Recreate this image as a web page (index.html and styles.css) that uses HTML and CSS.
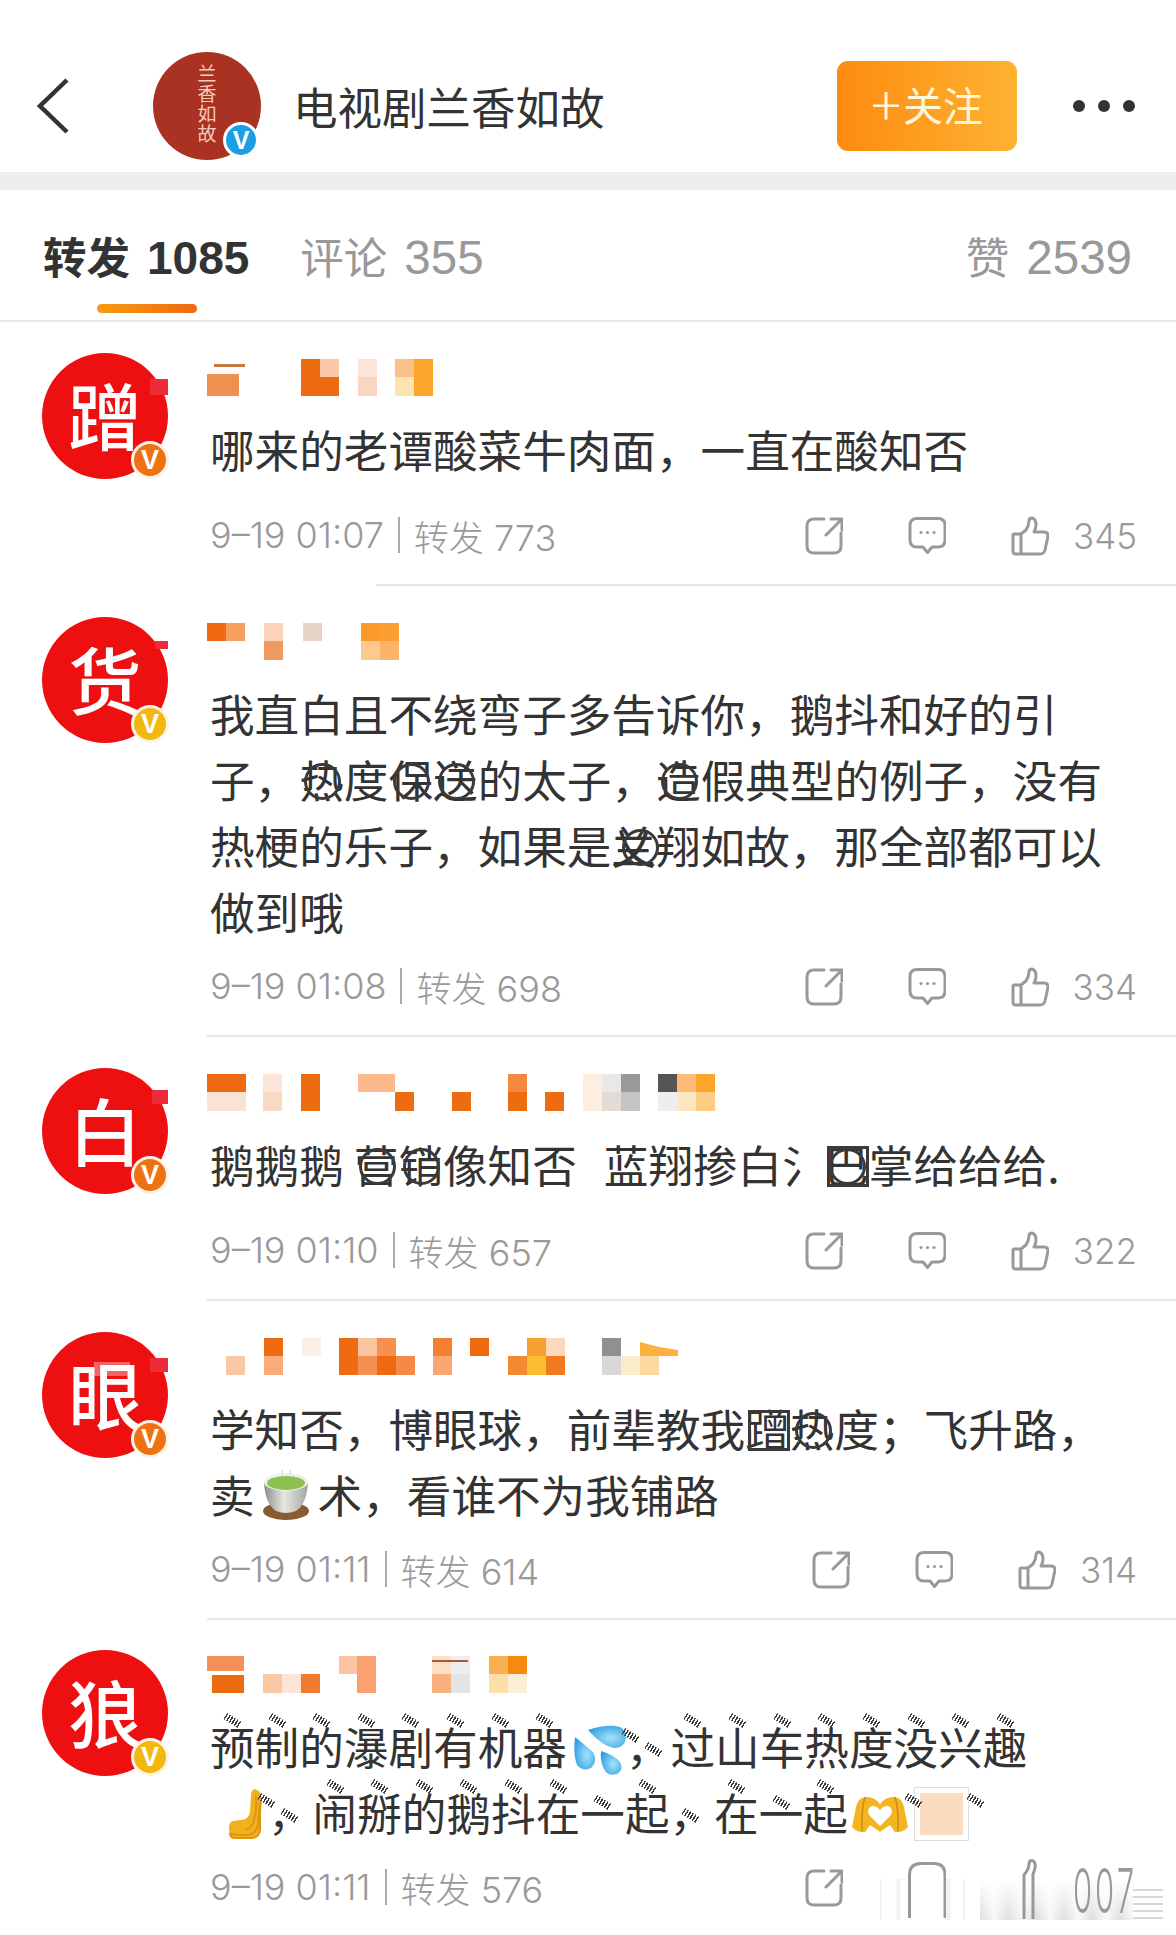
FILE: index.html
```html
<!DOCTYPE html>
<html lang="zh-CN">
<head>
    <meta charset="UTF-8">
    <meta name="viewport" content="width=device-width, initial-scale=1.0">
    <title>电视剧兰香如故</title>
    <link rel="stylesheet" href="styles.css">
</head>
<body>
    <svg class="defs" width="0" height="0">
        <defs>
            <radialGradient id="drop" cx="60%" cy="55%" r="65%">
                <stop offset="0" stop-color="#a5e4fa"/>
                <stop offset="1" stop-color="#2f9fe4"/>
            </radialGradient>
            <linearGradient id="cup" x1="0" x2="1" y1="0" y2="0">
                <stop offset="0" stop-color="#8d8d8a"/>
                <stop offset=".45" stop-color="#e6e6e2"/>
                <stop offset="1" stop-color="#a5a5a2"/>
            </linearGradient>
        </defs>
        <symbol id="i-share" viewBox="0 0 38 38">
            <path d="M19 2 H9 Q2 2 2 9 V29 Q2 36 9 36 H29 Q36 36 36 29 V16 M21 18 L36 3 M26 2 H37 V13" fill="none" stroke="#999" stroke-width="3" stroke-linecap="round" stroke-linejoin="round"/>
        </symbol>
        <symbol id="i-comment" viewBox="0 0 38 38">
            <path d="M9 1.5 H30 Q37 1.5 37 8.5 V23 Q37 30 30 30 H24 L19.5 35.5 L15 30 H9 Q2 30 2 23 V8.5 Q2 1.5 9 1.5 Z" fill="none" stroke="#999" stroke-width="3" stroke-linejoin="round"/>
            <circle cx="13" cy="15.5" r="1.6" fill="#999"/>
            <circle cx="19.5" cy="15.5" r="1.6" fill="#999"/>
            <circle cx="26" cy="15.5" r="1.6" fill="#999"/>
        </symbol>
        <symbol id="i-like" viewBox="0 0 38 40">
            <path d="M3 18 H10 V38 H5 Q2 38 2 35 V19 Q2 18 3 18 Z M10 18 L15 14 Q18 9 18 5 Q18 2 21 2 Q25 3 25 9 Q25 13 23 16 H33 Q37 16 37 20 L34 34 Q33 38 29 38 H10" fill="none" stroke="#999" stroke-width="3" stroke-linejoin="round"/>
        </symbol>
    </svg>

    <header class="topbar">
        <svg class="back" width="33" height="56" viewBox="0 0 33 56">
            <path d="M31 2 L4 28 L31 54" fill="none" stroke="#333" stroke-width="4.5"/>
        </svg>
        <div class="page-avatar">
            <div class="page-avatar-text">兰<br>香<br>如<br>故</div>
            <span class="badge badge-blue">V</span>
        </div>
        <div class="page-title">电视剧兰香如故</div>
        <button class="follow"><span class="plus">+</span>关注</button>
        <div class="dots"><i></i><i></i><i></i></div>
    </header>
    <div class="band"></div>

    <nav class="tabs">
        <div class="tab tab-active">转发<span class="num">1085</span></div>
        <div class="tab">评论<span class="num">355</span></div>
        <div class="tab tab-right">赞<span class="num">2539</span></div>
    </nav>

    <section class="row">
        <div class="avatar">蹭<span class="bit bit-a"></span><span class="badge badge-orange">V</span></div>
        <div class="body">
            <svg class="name" width="560" height="37">
                <rect x="0" y="15" width="32" height="22" fill="#f09050"/>
                <rect x="7" y="5" width="31" height="3" fill="#c97a40"/>
                <rect x="94" y="0" width="19" height="37" fill="#ee6c10"/>
                <rect x="113" y="0" width="19" height="18" fill="#fbc9a8"/>
                <rect x="113" y="18" width="19" height="19" fill="#ee6c10"/>
                <rect x="151" y="0" width="19" height="18" fill="#fce4da"/>
                <rect x="151" y="18" width="19" height="19" fill="#f8d5c5"/>
                <rect x="188" y="0" width="19" height="18" fill="#fbc088"/>
                <rect x="188" y="18" width="19" height="19" fill="#fde3b0"/>
                <rect x="207" y="0" width="19" height="37" fill="#fba52c"/>
            </svg>
            <p class="text text-one">哪来的老谭酸菜牛肉面，一直在酸知否</p>
            <div class="meta">
                <span class="time">9–19 01:07</span><span class="sep"></span><span class="time"><span class="zf">转发</span> 773</span>
                <div class="actions">
                    <svg class="icon"><use href="#i-share"/></svg>
                    <svg class="icon"><use href="#i-comment"/></svg>
                    <svg class="icon icon-like"><use href="#i-like"/></svg>
                    <span class="count">345</span>
                </div>
            </div>
            <div class="divider divider-short"></div>
        </div>
    </section>

    <section class="row">
        <div class="avatar">货<span class="bit bit-b"></span><span class="badge badge-yellow">V</span></div>
        <div class="body">
            <svg class="name" width="560" height="37">
                <rect x="0" y="0" width="19" height="18" fill="#f26a10"/>
                <rect x="19" y="0" width="19" height="18" fill="#f5a060"/>
                <rect x="57" y="0" width="19" height="18" fill="#fbd3b8"/>
                <rect x="57" y="18" width="19" height="19" fill="#f09a60"/>
                <rect x="96" y="0" width="19" height="18" fill="#e8d3c8"/>
                <rect x="154" y="0" width="19" height="18" fill="#fb9a28"/>
                <rect x="173" y="0" width="19" height="18" fill="#fb9f30"/>
                <rect x="154" y="18" width="19" height="19" fill="#fdc98c"/>
                <rect x="173" y="18" width="19" height="19" fill="#fdb468"/>
            </svg>
            <p class="text">我直白且不绕弯子多告诉你，鹅抖和好的引<br>子，<span class="ring">热</span>度<span class="ring">保</span><span class="ring">送</span>的太子，<span class="ring">造</span>假典型的例子，没有<br>热梗的乐子，如果是<span class="ring ring-x">兰</span>翔如故，那全部都可以<br>做到哦</p>
            <div class="meta">
                <span class="time">9–19 01:08</span><span class="sep"></span><span class="time"><span class="zf">转发</span> 698</span>
                <div class="actions">
                    <svg class="icon"><use href="#i-share"/></svg>
                    <svg class="icon"><use href="#i-comment"/></svg>
                    <svg class="icon icon-like"><use href="#i-like"/></svg>
                    <span class="count">334</span>
                </div>
            </div>
            <div class="divider"></div>
        </div>
    </section>

    <section class="row">
        <div class="avatar">白<span class="bit bit-c"></span><span class="badge badge-orange">V</span></div>
        <div class="body">
            <svg class="name" width="560" height="37">
                <rect x="0" y="0" width="39" height="18" fill="#ee6a10"/>
                <rect x="0" y="18" width="39" height="19" fill="#fbe3d3"/>
                <rect x="56" y="0" width="19" height="18" fill="#fbe5d8"/>
                <rect x="56" y="18" width="19" height="19" fill="#f9d9c2"/>
                <rect x="94" y="0" width="19" height="37" fill="#ee6c10"/>
                <rect x="151" y="0" width="37" height="18" fill="#fbb98c"/>
                <rect x="188" y="18" width="19" height="19" fill="#ee6c10"/>
                <rect x="245" y="18" width="19" height="19" fill="#ee6c10"/>
                <rect x="301" y="0" width="19" height="18" fill="#f5883f"/>
                <rect x="301" y="18" width="19" height="19" fill="#ee6c10"/>
                <rect x="338" y="18" width="19" height="19" fill="#ee6c10"/>
                <rect x="376" y="0" width="19" height="37" fill="#fdeee0"/>
                <rect x="395" y="0" width="19" height="18" fill="#e8e8e8"/>
                <rect x="395" y="18" width="19" height="19" fill="#e3dcd6"/>
                <rect x="414" y="0" width="19" height="18" fill="#999"/>
                <rect x="414" y="18" width="19" height="19" fill="#c4c4c4"/>
                <rect x="451" y="0" width="19" height="18" fill="#555"/>
                <rect x="451" y="18" width="19" height="19" fill="#eee"/>
                <rect x="470" y="0" width="19" height="18" fill="#fdbb77"/>
                <rect x="470" y="18" width="19" height="19" fill="#fde7c0"/>
                <rect x="489" y="0" width="19" height="18" fill="#fba52c"/>
                <rect x="489" y="18" width="19" height="19" fill="#fdcc85"/>
            </svg>
            <p class="text text-one">鹅鹅鹅<span class="gap"></span><span class="ring">营</span><span class="ring">销</span>像知否<span class="gap gap-wide"></span>蓝翔掺白<span class="cut">氵</span><span class="gap gap-wide"></span><span class="ring box">巴</span>掌给给给.</p>
            <div class="meta">
                <span class="time">9–19 01:10</span><span class="sep"></span><span class="time"><span class="zf">转发</span> 657</span>
                <div class="actions">
                    <svg class="icon"><use href="#i-share"/></svg>
                    <svg class="icon"><use href="#i-comment"/></svg>
                    <svg class="icon icon-like"><use href="#i-like"/></svg>
                    <span class="count">322</span>
                </div>
            </div>
            <div class="divider"></div>
        </div>
    </section>

    <section class="row">
        <div class="avatar">眼<span class="bit bit-d"></span><span class="bit bit-pale"></span><span class="badge badge-orange">V</span></div>
        <div class="body">
            <svg class="name" width="560" height="37">
                <rect x="19" y="18" width="19" height="19" fill="#fbc8a5"/>
                <rect x="57" y="0" width="19" height="18" fill="#ee6c10"/>
                <rect x="57" y="18" width="19" height="19" fill="#fbab7a"/>
                <rect x="95" y="0" width="19" height="18" fill="#fbefe8"/>
                <rect x="132" y="0" width="19" height="37" fill="#ee6c10"/>
                <rect x="151" y="0" width="19" height="18" fill="#fbc4a0"/>
                <rect x="151" y="18" width="19" height="19" fill="#f59050"/>
                <rect x="170" y="0" width="19" height="18" fill="#f5904e"/>
                <rect x="170" y="18" width="19" height="19" fill="#ee6a10"/>
                <rect x="189" y="18" width="19" height="19" fill="#f58a45"/>
                <rect x="226" y="0" width="19" height="18" fill="#f28030"/>
                <rect x="226" y="18" width="19" height="19" fill="#fba675"/>
                <rect x="263" y="0" width="19" height="18" fill="#ee6a10"/>
                <rect x="301" y="18" width="19" height="19" fill="#f48a30"/>
                <rect x="320" y="0" width="19" height="18" fill="#f5a030"/>
                <rect x="320" y="18" width="19" height="19" fill="#fcbc30"/>
                <rect x="339" y="0" width="19" height="18" fill="#fcd9bc"/>
                <rect x="339" y="18" width="19" height="19" fill="#ef7a20"/>
                <rect x="395" y="0" width="19" height="18" fill="#909090"/>
                <rect x="395" y="18" width="19" height="19" fill="#d8d8d8"/>
                <rect x="414" y="18" width="19" height="19" fill="#fbeccc"/>
                <path d="M433 4 L452 9 V18 H433 Z M452 9 L471 12 V18 H452 Z" fill="#fbb040"/>
                <rect x="433" y="18" width="19" height="19" fill="#fbd9a0"/>
            </svg>
            <p class="text">学知否，博眼球，前辈教我<span class="box">蹭</span><span class="ring">热</span>度；飞升路，<br>卖<svg class="emoji emoji-tea" width="50" height="50" viewBox="0 0 50 50">
                <ellipse cx="25" cy="41" rx="23" ry="9" fill="#8a5a30"/>
                <path d="M3 12 Q4 34 15 41 Q25 45 35 41 Q46 34 47 12 Z" fill="url(#cup)"/>
                <ellipse cx="25" cy="12" rx="22" ry="9" fill="#f0f0ec"/>
                <ellipse cx="25" cy="13" rx="19" ry="7" fill="#8cc152"/>
                <path d="M22 5 Q19 2 22 0 M28 5 Q31 2 28 0" fill="none" stroke="#ddd" stroke-width="1.5"/>
            </svg>术，看谁不为我铺路</p>
            <div class="meta">
                <span class="time">9–19 01:11</span><span class="sep"></span><span class="time"><span class="zf">转发</span> 614</span>
                <div class="actions">
                    <svg class="icon"><use href="#i-share"/></svg>
                    <svg class="icon"><use href="#i-comment"/></svg>
                    <svg class="icon icon-like"><use href="#i-like"/></svg>
                    <span class="count">314</span>
                </div>
            </div>
            <div class="divider"></div>
        </div>
    </section>

    <section class="row row-last">
        <div class="avatar">狼<span class="badge badge-yellow">V</span></div>
        <div class="body">
            <svg class="name" width="560" height="37">
                <rect x="0" y="0" width="37" height="15" fill="#f5905a"/>
                <rect x="5" y="19" width="32" height="18" fill="#ee6c10"/>
                <rect x="56" y="18" width="19" height="19" fill="#fbc8a5"/>
                <rect x="75" y="18" width="19" height="19" fill="#fbe4d8"/>
                <rect x="94" y="18" width="19" height="19" fill="#f07a30"/>
                <rect x="132" y="0" width="18" height="18" fill="#fbc4a0"/>
                <rect x="150" y="0" width="19" height="37" fill="#fba070"/>
                <rect x="225" y="0" width="19" height="18" fill="#fce0c8"/>
                <rect x="225" y="18" width="19" height="19" fill="#fbb080"/>
                <rect x="244" y="0" width="19" height="18" fill="#eeeeee"/>
                <rect x="244" y="18" width="19" height="19" fill="#e2e4e6"/>
                <rect x="225" y="4" width="36" height="2" fill="#a85a30"/>
                <rect x="282" y="0" width="19" height="18" fill="#f9b050"/>
                <rect x="282" y="18" width="19" height="19" fill="#fde0a8"/>
                <rect x="301" y="0" width="19" height="18" fill="#f58a10"/>
                <rect x="301" y="18" width="19" height="19" fill="#fdeed8"/>
            </svg>
            <p class="text"><span class="h">预</span><span class="h">制</span><span class="h">的</span><span class="h">瀑</span><span class="h">剧</span><span class="h">有</span><span class="h">机</span><span class="h">器</span><svg class="emoji emoji-drops" width="52" height="50" viewBox="0 0 52 50">
                <path d="M14 5 Q30 0 41 1 Q52 2 52 12 Q51 23 40 23 Q28 21 14 5 Z" fill="url(#drop)"/>
                <path d="M1 12 Q11 20 19 27 Q24 36 17 43 Q9 47 3 40 Q-1 30 1 12 Z" fill="url(#drop)"/>
                <path d="M27 26 Q40 30 46 37 Q50 45 43 49 Q34 52 30 44 Q26 36 27 26 Z" fill="url(#drop)"/>
            </svg><span class="h h-comma">，</span><span class="h">过</span><span class="h">山</span><span class="h">车</span><span class="h">热</span><span class="h">度</span><span class="h">没</span><span class="h">兴</span><span class="h">趣</span><br><span class="h h-hand"><svg class="emoji emoji-hand" width="34" height="52" viewBox="0 0 34 52">
                <path d="M25 1 Q22 3 22 8 L21 24 Q20 31 12 32 L4 33 Q0 34 0 40 Q0 50 5 50 L22 50 Q30 50 31 42 L33 10 Q32 2 25 1 Z" fill="#f2b01e"/>
                <path d="M27 8 Q28 22 25 32 Q24 40 16 42 M31 42 Q30 50 22 50 L5 50 Q2 50 1 46 Q14 48 22 46 Q28 44 29 36 L31 14 Z" fill="none" stroke="#dc960f" stroke-width="2"/>
            </svg></span><span class="h h-low">，</span><span class="h">闹</span><span class="h">掰</span><span class="h">的</span><span class="h">鹅</span><span class="h">抖</span><span class="h">在</span><span class="h h-mid">一</span><span class="h">起</span><span class="h h-low">，</span><span class="h">在</span><span class="h h-mid">一</span><span class="h">起</span><svg class="emoji emoji-heart" width="56" height="38" viewBox="0 0 56 38">
                <path d="M28 9 Q22 1 13 2 Q6 3 4 12 L0 32 Q5 38 13 37 L18 30 L28 37 L38 30 L43 37 Q51 38 56 32 L52 12 Q50 3 43 2 Q34 1 28 9 Z" fill="#f5b520"/>
                <path d="M28 15 Q23 9 18 12 Q14 16 18 21 L28 31 L38 21 Q42 16 38 12 Q33 9 28 15 Z" fill="#fff"/>
                <path d="M13 2 Q9 16 10 36 M43 2 Q47 16 46 36" fill="none" stroke="#cf8a12" stroke-width="1.5"/>
            </svg><span class="h h-tofu"><span class="tofu"></span></span></p>
            <div class="smear-fade"></div>
            <div class="smear-side"></div>
            <div class="smear-mark"></div>
            <div class="meta">
                <span class="time">9–19 01:11</span><span class="sep"></span><span class="time"><span class="zf">转发</span> 576</span>
                <div class="actions">
                    <svg class="icon"><use href="#i-share"/></svg>
                    <svg class="smear-icon smear-comment" width="38" height="56" viewBox="0 0 38 56">
                        <path d="M1.5 56 V13 Q1.5 1.5 13 1.5 H26 Q37 1.5 37 13 V56" fill="none" stroke="#999" stroke-width="3"/>
                    </svg>
                    <svg class="smear-icon smear-like" width="38" height="60" viewBox="0 0 38 60">
                        <path d="M13 60 V16 Q18 10 18 5 Q18 1.5 21 1.5 Q25 2 24 9 Q23 13 22 15 V60" fill="none" stroke="#999" stroke-width="3"/>
                    </svg>
                    <span class="smear-count">007</span>
                </div>
            </div>
            <div class="smear-foot"></div>
        </div>
    </section>
</body>
</html>
```

FILE: styles.css
```css
* { box-sizing: border-box; }
html, body { margin: 0; padding: 0; }
body {
    width: 1176px;
    height: 1935px;
    overflow: hidden;
    background: #fff;
    color: #333;
    font-family: "Liberation Sans", "Noto Sans CJK SC", sans-serif;
}
.defs { position: absolute; }

/* top bar */
.topbar { display: flex; align-items: center; height: 172px; padding: 40px 0 0 36px; }
.back { flex: none; }
.page-avatar {
    position: relative;
    flex: none;
    width: 108px;
    height: 108px;
    margin-left: 84px;
    border-radius: 50%;
    background: #a93222;
}
.page-avatar-text {
    padding: 13px 0 0 0;
    text-align: center;
    color: #f1cdbd;
    font-family: "Liberation Serif", "Noto Sans CJK SC", serif;
    font-size: 19px;
    line-height: 20px;
}
.page-title { flex: 1; margin-left: 32px; padding-bottom: 2px; font-size: 44.5px; font-weight: 400; }
.follow {
    flex: none;
    width: 180px;
    height: 90px;
    padding: 0 0 6px;
    border: none;
    border-radius: 11px;
    background: linear-gradient(90deg, #fd8b10, #fdb232);
    color: #fff6dc;
    font-family: "Noto Sans CJK SC", sans-serif;
    font-size: 40px;
}
.plus { margin-right: 2px; font-size: 56px; font-weight: 300; line-height: 1; vertical-align: -5px; }
.dots { display: flex; gap: 13px; margin: 0 41px 0 56px; }
.dots i { width: 12px; height: 12px; border-radius: 50%; background: #333; }
.band { height: 18px; background: #eee; }

/* tabs */
.tabs {
    display: flex;
    gap: 51px;
    height: 132px;
    padding: 43px 44px 0 43px;
    border-bottom: 2px solid #e8e8e8;
    color: #999;
    font-size: 43.5px;
    line-height: 50px;
}
.tab { position: relative; }
.tab-active { color: #333; font-weight: bold; }
.tab-active::after {
    content: "";
    position: absolute;
    left: 54px;
    top: 71px;
    width: 100px;
    height: 9px;
    border-radius: 5px;
    background: linear-gradient(90deg, #f79a10, #f06a10);
}
.tab-right { margin-left: auto; }
.num { margin-left: 17px; font-size: 47.5px; }
.tab-active .num { font-size: 46px; }

/* reposts */
.row { display: flex; gap: 39px; padding: 31px 0 0 42px; }
.row-last { padding-top: 30px; }
.avatar {
    position: relative;
    flex: none;
    width: 126px;
    height: 126px;
    border-radius: 50%;
    background: #ee1010;
    color: #fff;
    text-align: center;
    font-family: "Noto Sans CJK SC", sans-serif;
    font-size: 73px;
    font-weight: 500;
    line-height: 120px;
}
.bit { position: absolute; background: #ee2b3b; }
.bit-a { left: 108px; top: 26px; width: 18px; height: 16px; }
.bit-b { left: 113px; top: 24px; width: 13px; height: 8px; }
.bit-c { left: 110px; top: 22px; width: 16px; height: 14px; }
.bit-d { left: 108px; top: 26px; width: 18px; height: 14px; }
.bit-pale { left: 52px; top: 30px; width: 36px; height: 14px; background: rgba(255, 255, 255, .35); }
.badge {
    position: absolute;
    right: -1px;
    bottom: 0;
    width: 38px;
    height: 38px;
    border: 3px solid #fdf3e8;
    border-radius: 50%;
    color: #fff;
    font-family: "Liberation Sans", sans-serif;
    font-size: 27px;
    font-weight: bold;
    line-height: 32px;
    text-align: center;
}
.badge-orange { background: #ee7212; }
.badge-yellow { background: #f2b80f; }
.badge-blue {
    right: 2px;
    bottom: 2px;
    width: 36px;
    height: 36px;
    border-color: #fff;
    background: #1c9ee6;
    font-size: 25px;
    line-height: 30px;
}
.body { flex: 1; min-width: 0; }
.name { display: block; margin: 6px 0 20px; }
.text {
    min-height: 66px;
    margin: 0 0 17px;
    padding-left: 3px;
    font-family: "Noto Sans CJK SC", sans-serif;
    font-size: 44.6px;
    line-height: 66px;
    white-space: nowrap;
}
.text-one { min-height: 77px; }
.meta { display: flex; align-items: center; height: 50px; padding: 0 39px 0 3px; color: #999; }
.time { font-family: "Inter", "Noto Sans CJK SC", sans-serif; font-size: 36px; font-weight: 300; }
.zf { font-size: 35px; }
.sep { width: 2px; height: 36px; margin: 0 14px 0 14px; background: #aaa; }
.actions { position: relative; z-index: 1; display: flex; align-items: center; gap: 65px; margin-left: auto; padding-top: 2px; }
.icon { width: 38px; height: 38px; }
.icon-like { height: 40px; }
.count { margin-left: -41px; font-family: "Inter", sans-serif; font-size: 35px; font-weight: 300; }
.divider { height: 2px; margin-top: 24px; background: #e6e6e6; }
.divider-short { margin-left: 169px; }

/* marks sitting on the text */
.ring, .box { position: relative; }
.ring::after {
    content: "";
    position: absolute;
    left: 5px;
    top: 17px;
    width: 31px;
    height: 31px;
    border: 3px solid #3a3a3a;
    border-radius: 50%;
}
.ring-x::after { left: 11px; }
.ring-x::before {
    content: "乂";
    position: absolute;
    left: 0;
    top: 0;
}
.box::before {
    content: "";
    position: absolute;
    left: 3px;
    top: 15px;
    width: 36px;
    height: 35px;
    border: 3px solid #3a3a3a;
}
.gap { display: inline-block; width: 10px; }
.gap-wide { width: 27px; }
.cut { display: inline-block; width: 15px; vertical-align: top; }

.emoji { vertical-align: -9px; }
.emoji-tea { margin: 0 7px 0 6px; vertical-align: -7px; }
.emoji-drops { margin: 0 0 0 7px; vertical-align: -10px; }
.emoji-hand { margin: 0 5px 0 19px; }
.emoji-heart { margin: 0 3px 0 4px; vertical-align: -2px; }
.tofu { display: inline-block; width: 53px; height: 52px; border: 5px solid #fff; outline: 1px solid #ddd; background: #fbdcc0; vertical-align: -9px; }
.h-tofu { margin-left: 4px; }

/* noise marks in the last repost */
.h { position: relative; }
.h::before, .h-comma::after, .h-tofu::after {
    content: "";
    position: absolute;
    left: 14px;
    top: 4px;
    width: 17px;
    height: 7px;
    background: repeating-linear-gradient(90deg, #3a3a3a 0 1.5px, transparent 1.5px 3px);
    transform: rotate(32deg);
}
.h-mid::before { top: 20px; }
.h-low::before { left: 13px; top: 33px; }
.h-comma::before { left: -4px; top: 19px; }
.h-comma::after { left: 19px; top: 33px; }
.h-hand::before { left: 48px; top: 18px; }
.h-tofu::before { left: -10px; top: 18px; }
.h-tofu::after { left: 52px; top: 18px; }

/* last row runs into the stretched edge of the image */
.row-last .body { position: relative; }
.smear-icon { align-self: flex-start; }
.smear-comment { margin-top: 5px; }
.smear-like { margin-top: 2px; }
.smear-count {
    align-self: flex-start;
    display: block;
    margin: 0 0 0 -41px;
    font-family: "Inter", sans-serif;
    font-size: 31px;
    font-weight: 300;
    letter-spacing: 3px;
    line-height: 34px;
    transform: scaleY(2);
    transform-origin: 0 0;
}
.smear-fade {
    position: absolute;
    left: 773px;
    top: 229px;
    width: 155px;
    height: 43px;
    background: repeating-linear-gradient(90deg, #dcdcdc 0, #f7f7f7 14px, #dcdcdc 28px);
    -webkit-mask-image: linear-gradient(180deg, transparent, #000);
    mask-image: linear-gradient(180deg, transparent, #000);
}
.smear-side {
    position: absolute;
    left: 673px;
    top: 229px;
    width: 85px;
    height: 43px;
    background: linear-gradient(90deg, #eee 0, #fff 3px, #fff 15px, #eee 18px, transparent 22px, transparent 65px, #eee 68px, #fff 72px, #fff 82px, #eee 85px);
}
.smear-mark {
    position: absolute;
    left: 926px;
    top: 239px;
    width: 30px;
    height: 30px;
    background: repeating-linear-gradient(0deg, #d8d8d8 0 2px, #fff 2px 7px);
}
.smear-foot {
    position: absolute;
    z-index: 2;
    left: 600px;
    top: 270px;
    width: 369px;
    height: 20px;
    background: #fff;
}
```
